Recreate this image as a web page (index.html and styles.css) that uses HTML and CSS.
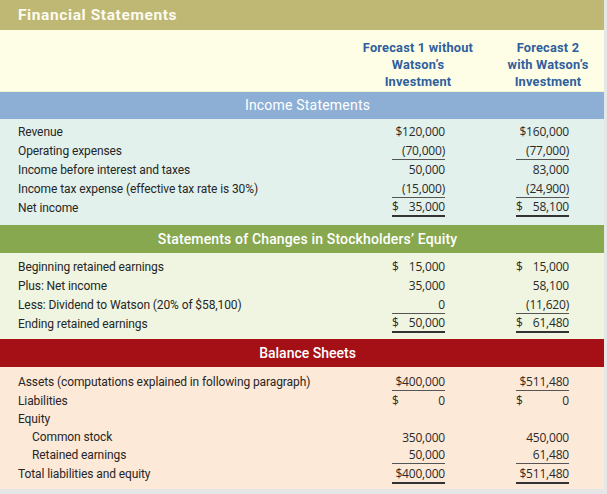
FILE: index.html
```html
<!DOCTYPE html>
<html>
<head>
<meta charset="utf-8">
<link rel="stylesheet" href="styles.css">
</head>
<body>
<div class="panel">
  <div class="title">Financial Statements</div>
  <div class="colhead">
    <div class="ch ch1">Forecast 1 without<br>Watson’s<br>Investment</div>
    <div class="ch ch2">Forecast 2<br>with Watson’s<br>Investment</div>
  </div>

  <div class="band band-blue">Income Statements</div>
  <div class="body body-income">
    <div class="row"><div class="label">Revenue</div><div class="num">$120,000</div><div class="num">$160,000</div></div>
    <div class="row"><div class="label">Operating expenses</div><div class="num ul">(70,000)</div><div class="num ul">(77,000)</div></div>
    <div class="row"><div class="label">Income before interest and taxes</div><div class="num">50,000</div><div class="num">83,000</div></div>
    <div class="row"><div class="label">Income tax expense (effective tax rate is 30%)</div><div class="num ul">(15,000)</div><div class="num ul">(24,900)</div></div>
    <div class="row"><div class="label">Net income</div><div class="num sp dul"><span>$</span><span>35,000</span></div><div class="num sp dul"><span>$</span><span>58,100</span></div></div>
  </div>

  <div class="band band-green">Statements of Changes in Stockholders’ Equity</div>
  <div class="body body-equity">
    <div class="row"><div class="label">Beginning retained earnings</div><div class="num sp"><span>$</span><span>15,000</span></div><div class="num sp"><span>$</span><span>15,000</span></div></div>
    <div class="row"><div class="label">Plus: Net income</div><div class="num">35,000</div><div class="num">58,100</div></div>
    <div class="row"><div class="label">Less: Dividend to Watson (20% of $58,100)</div><div class="num ul">0</div><div class="num ul">(11,620)</div></div>
    <div class="row"><div class="label">Ending retained earnings</div><div class="num sp dul"><span>$</span><span>50,000</span></div><div class="num sp dul"><span>$</span><span>61,480</span></div></div>
  </div>

  <div class="band band-red">Balance Sheets</div>
  <div class="body body-balance">
    <div class="row"><div class="label">Assets (computations explained in following paragraph)</div><div class="num ul">$400,000</div><div class="num ul">$511,480</div></div>
    <div class="row"><div class="label">Liabilities</div><div class="num sp"><span>$</span><span>0</span></div><div class="num sp"><span>$</span><span>0</span></div></div>
    <div class="row r18"><div class="label">Equity</div><div class="num"></div><div class="num"></div></div>
    <div class="row r18"><div class="label indent">Common stock</div><div class="num">350,000</div><div class="num">450,000</div></div>
    <div class="row r18"><div class="label indent">Retained earnings</div><div class="num ul">50,000</div><div class="num ul">61,480</div></div>
    <div class="row r20"><div class="label">Total liabilities and equity</div><div class="num dul">$400,000</div><div class="num dul">$511,480</div></div>
  </div>
</div>
</body>
</html>
```

FILE: styles.css
```css
html, body {
  margin: 0;
  padding: 0;
  background: #e6e6e6;
}
.panel {
  width: 604px;
  height: 489px;
  background: #fefee8;
  display: flex;
  flex-direction: column;
}
.title {
  height: 30px;
  line-height: 30px;
  background: #bfb874;
  color: #fbfbf0;
  font-family: Roboto, "Noto Sans", sans-serif;
  font-weight: 700;
  font-size: 15.5px;
  letter-spacing: 0.6px;
  padding-left: 18px;
}
.colhead {
  height: 62px;
  box-sizing: border-box;
  padding-top: 9px;
  display: flex;
  justify-content: flex-end;
  background: #fefee6;
  border-bottom: 1px solid #f4f1d0;
}
.ch {
  font-family: Roboto, "Noto Sans", sans-serif;
  font-weight: 700;
  font-size: 12.8px;
  letter-spacing: 0.2px;
  line-height: 17px;
  color: #2f5f9c;
  text-align: center;
}
.ch1 { width: 124px; margin-right: 21px; }
.ch2 { width: 94px; margin-right: 9px; }

.band {
  height: 28px;
  line-height: 28px;
  text-align: center;
  padding-left: 11px;
  color: #fff;
  font-family: Roboto, "Noto Sans", sans-serif;
  font-weight: 500;
  font-size: 14px;
}
.band-blue { background: #8eafd5; height: 27px; line-height: 27px; font-weight: 400; letter-spacing: 0.2px; }
.band-green { background: #87a84f; letter-spacing: 0.15px; }
.band-red { background: #a50f16; }

.body { box-sizing: border-box; }
.body-income { background: #e2f1ec; height: 106px; padding-top: 3px; }
.body-equity { background: #eff5e0; height: 86px; padding-top: 4px; }
.body-balance { background: #fde9d8; flex: 1; padding-top: 5px; }

.row {
  display: flex;
  height: 19px;
  align-items: stretch;
}
.row.r18 { height: 18px; }
.row.r20 { height: 20px; }
.label {
  flex: 1;
  padding-left: 18px;
  font-family: Roboto, "Noto Sans", sans-serif;
  font-size: 12px;
  letter-spacing: -0.1px;
  color: #262626;
  display: flex;
  align-items: center;
}
.label.indent { padding-left: 32px; }
.num {
  width: 53px;
  box-sizing: border-box;
  font-family: "Open Sans", Lato, sans-serif;
  font-size: 12px;
  letter-spacing: -0.2px;
  color: #2a2a2a;
  display: flex;
  align-items: center;
  justify-content: flex-end;
}
.num + .num { margin-left: 71px; }
.num:last-child { margin-right: 35px; }
.num.sp { justify-content: space-between; }
.num.ul { border-bottom: 1px solid #555; }
.num.dul { border-bottom: 2px solid #333; }
```
